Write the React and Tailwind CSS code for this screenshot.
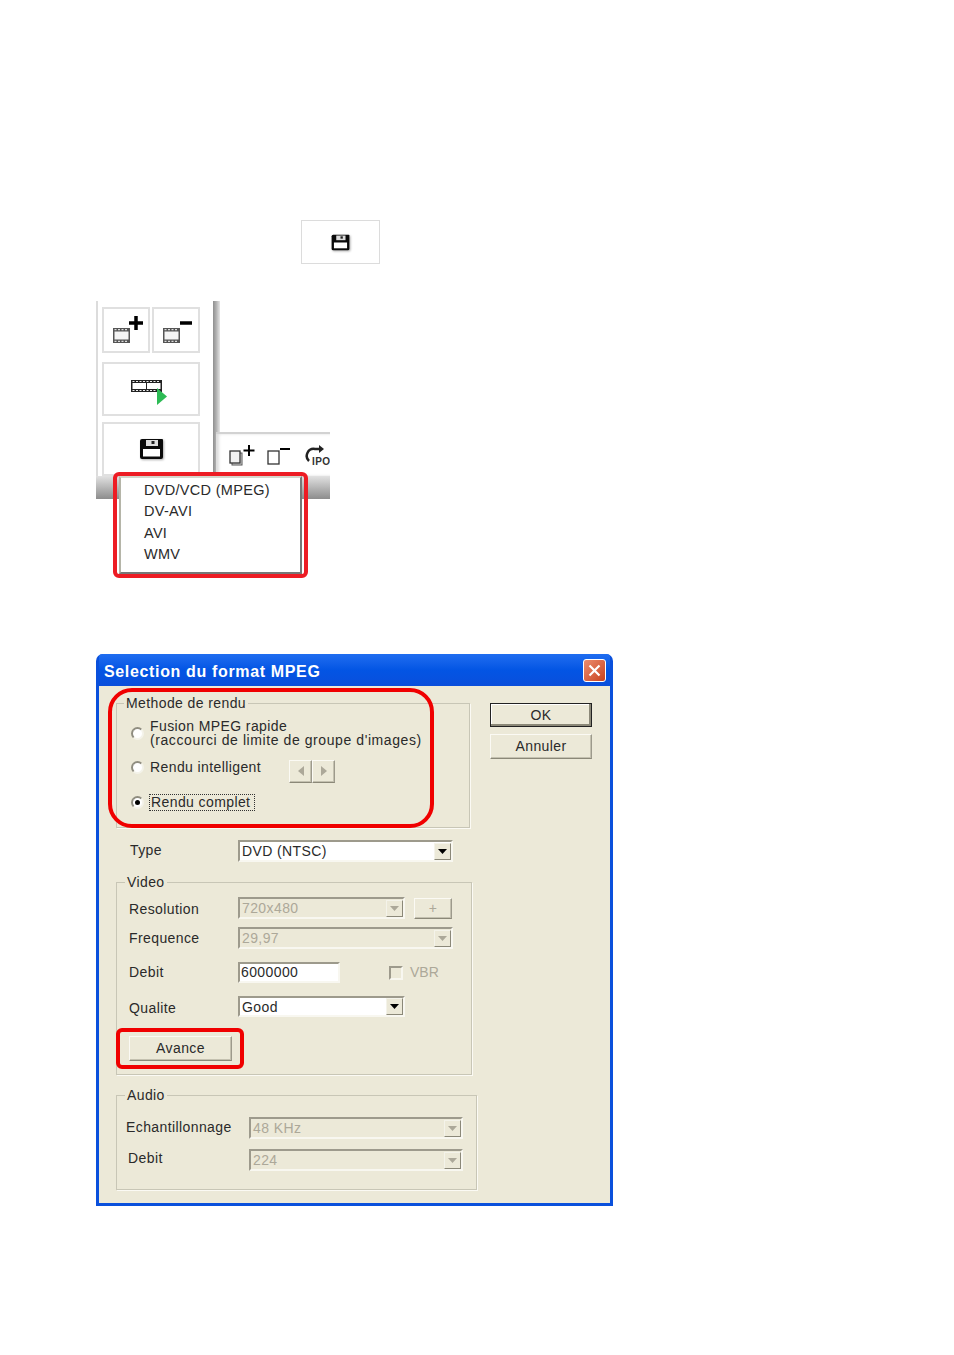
const FONT = "font-['Liberation_Sans',sans-serif] text-[14px] tracking-[0.4px] text-[#2a2a2a]";
const SUNKEN = 'border-2 border-t-[#9d9a8c] border-l-[#9d9a8c] border-r-[#f8f7f0] border-b-[#f8f7f0]';

function Floppy({ className }) {
  return (
    <svg viewBox="0 0 25 22" className={`drop-shadow-[1px_1px_1px_#aaa] ${className}`}>
      <path d="M1 3a2 2 0 0 1 2-2h20a1 1 0 0 1 1 1v17a2 2 0 0 1-2 2H3a2 2 0 0 1-2-2z" fill="#0a0a0a" />
      <rect x="7" y="2" width="12" height="6" fill="#ddd" />
      <rect x="12.500" y="3" width="3" height="3" fill="#222" />
      <rect x="4" y="11" width="17" height="7.500" fill="#fff" />
    </svg>
  );
}

function Film({ x, y }) {
  return (
    <g transform={`translate(${x} ${y})`}>
      <rect width="17" height="15" fill="#555" />
      <rect x="1.500" y="3.500" width="14" height="8" fill="#f4f4f4" />
      <path d="M1.500 1.700h14M1.500 13.300h14" stroke="#ddd" strokeWidth="1.200" strokeDasharray="2 1.500" />
    </g>
  );
}

function ToolButton({ className, children }) {
  return (
    <div className={`flex items-center justify-center border-2 border-[#e0e0e0] bg-white ${className}`}>
      {children}
    </div>
  );
}

function Arrow({ disabled }) {
  return (
    <span className="flex h-[17px] w-[17px] shrink-0 items-center justify-center border border-t-[#f4f3ea] border-l-[#f4f3ea] border-r-[#8b8878] border-b-[#8b8878] bg-[#ece9d8]">
      <svg viewBox="0 0 9 5" className="h-[5px] w-[9px]">
        <path d="M0 0h9L4.500 5z" fill={disabled ? '#aca899' : '#000'} />
      </svg>
    </span>
  );
}

function Combo({ value, disabled, className }) {
  return (
    <div className={`flex items-center justify-between ${SUNKEN} ${disabled ? 'bg-[#ece9d8] text-[#aca899]' : 'bg-white'} ${className}`}>
      <span className="pl-[2px] leading-none">{value}</span>
      <Arrow disabled={disabled} />
    </div>
  );
}

function XpButton({ children, className, isDefault, disabled }) {
  return (
    <div
      className={`flex items-center justify-center border bg-[#ece9d8] ${
        isDefault
          ? 'border-[#222] shadow-[inset_-2px_-2px_0_#8b8878,inset_1px_1px_0_#fff]'
          : 'border-t-[#fbfaf4] border-l-[#fbfaf4] border-r-[#9d9a8c] border-b-[#8b8878] shadow-[inset_-1px_-1px_0_#c4c1b0]'
      } ${disabled ? 'text-[#aca899]' : ''} ${className}`}
    >
      {children}
    </div>
  );
}

function Radio({ checked }) {
  return (
    <span className="flex h-[13px] w-[13px] shrink-0 items-center justify-center rounded-full border-2 border-t-[#8f8d80] border-l-[#8f8d80] border-r-[#f4f3ea] border-b-[#f4f3ea] bg-white">
      {checked && <span className="h-[5px] w-[5px] shrink-0 rounded-full bg-black" />}
    </span>
  );
}

function Group({ title, legendLeft, className, children }) {
  return (
    <div className={`relative border border-[#c8c6b6] shadow-[1px_1px_0_#fbfaf4] ${className}`}>
      <span className={`absolute -top-[10px] bg-[#ece9d8] px-[2px] leading-[18px] ${legendLeft}`}>{title}</span>
      {children}
    </div>
  );
}

function Toolbar() {
  return (
    <div className="relative ml-[96px] mt-[37px] w-[234px]">
      <div className="flex h-[175px]">
        <div className="flex w-[117px] shrink-0 flex-col border-l-2 border-[#dcdcdc] pl-[4px] pt-[6px]">
          <div className="flex gap-[2px]">
            <ToolButton className="h-[46px] w-[48px]">
              <svg viewBox="0 0 48 46" className="h-[46px] w-[48px] shrink-0">
                <Film x="11" y="21" />
                <path d="M34 9v14M27 16h14" stroke="#000" strokeWidth="3.500" />
              </svg>
            </ToolButton>
            <ToolButton className="h-[46px] w-[48px]">
              <svg viewBox="0 0 48 46" className="h-[46px] w-[48px] shrink-0">
                <Film x="11" y="21" />
                <path d="M28 16h12" stroke="#000" strokeWidth="3.500" />
              </svg>
            </ToolButton>
          </div>
          <ToolButton className="mt-[9px] h-[54px] w-[98px]">
            <svg viewBox="0 0 38 26" className="-ml-[2px] mt-[8px] h-[26px] w-[38px] shrink-0">
              <rect width="31" height="12" fill="#222" />
              <rect x="1.500" y="3" width="13.500" height="6" fill="#fff" />
              <rect x="16" y="3" width="13.500" height="6" fill="#fff" />
              <path d="M1.500 1.500h28M1.500 10.500h28" stroke="#eee" strokeDasharray="2 1.500" />
              <path d="M26 8l10 8.500L26 25z" fill="#2dbb55" />
            </svg>
          </ToolButton>
          <ToolButton className="mt-[6px] h-[54px] w-[98px]">
            <Floppy className="h-[22px] w-[25px]" />
          </ToolButton>
        </div>
        <div className="w-[7px] shrink-0 bg-linear-to-r from-[#8f8f8f] via-[#b5b5b5] to-[#e6e6e6]" />
        <div className="-ml-[4px] flex min-w-0 flex-1 flex-col justify-end">
          <div className="flex h-[44px] items-center gap-[12px] overflow-hidden border-t-2 border-[#d2d2d2] bg-white pl-[13px] shadow-[inset_3px_0_3px_#ddd]">
            <svg viewBox="0 0 26 22" className="h-[22px] w-[26px] shrink-0">
              <rect x="3" y="9" width="10" height="12" fill="#ddd" stroke="#555" />
              <rect x="1" y="7" width="10" height="12" fill="#f2f2f2" stroke="#333" strokeWidth="1.300" />
              <path d="M20 1v11M14.500 6.500h11" stroke="#000" strokeWidth="2" />
            </svg>
            <svg viewBox="0 0 26 22" className="h-[22px] w-[26px] shrink-0">
              <rect x="1" y="7" width="11" height="13" fill="#fff" stroke="#333" strokeWidth="1.300" />
              <path d="M13 5h10" stroke="#000" strokeWidth="2" />
            </svg>
            <svg viewBox="0 0 25 24" className="h-[24px] w-[25px] shrink-0">
              <path d="M4 18a7 7 0 0 1 6-12h5" fill="none" stroke="#222" strokeWidth="2.500" />
              <path d="M14 2l5 4-5 4z" fill="#222" />
              <text x="7" y="22" className="font-['Liberation_Sans',sans-serif] text-[10px] font-bold" fill="#333">IPO</text>
            </svg>
          </div>
        </div>
      </div>
      <div className="h-[23px] bg-linear-to-b from-[#e2e2e2] to-[#8d8d8d]" />
      <div className="absolute left-[23px] top-[175px] h-[98px] w-[183px] border-2 border-t-[#d5d5cc] border-l-[#b5b5a8] border-r-[#777] border-b-[#777] bg-white pl-[23px] pt-[2px] text-[14.500px] leading-[21.300px] tracking-[0.3px]">
        <div>DVD/VCD (MPEG)</div>
        <div>DV-AVI</div>
        <div>AVI</div>
        <div>WMV</div>
      </div>
      <div className="absolute left-[17px] top-[171px] h-[106px] w-[195px] rounded-[6px] border-4 border-[#ed1c24]" />
    </div>
  );
}

function Dialog() {
  return (
    <div className="ml-[96px] mt-[155px] w-[517px] overflow-hidden rounded-t-[7px] bg-[#0a50dc] px-[3px] pb-[3px]">
      <div className="flex h-[32px] items-center justify-between bg-linear-to-b from-[#1f6df0] via-[#0355e4] to-[#0a4edb] pr-[4px] pl-[5px]">
        <span className="pt-[3px] font-['Liberation_Sans',sans-serif] text-[16px] font-bold tracking-[0.65px] text-white">
          Selection du format MPEG
        </span>
        <div className="flex h-[23px] w-[23px] items-center justify-center rounded-[3px] border border-white bg-linear-to-br from-[#eb8c6e] to-[#c8401a]">
          <svg viewBox="0 0 13 13" className="h-[13px] w-[13px]">
            <path d="M1.500 1.500l10 10M11.500 1.500l-10 10" stroke="#fff" strokeWidth="2.200" />
          </svg>
        </div>
      </div>

      <div className="flex h-[517px] bg-[#ece9d8] pl-[17px] pt-[17px]">
        <div className="flex w-[374px] flex-col">
          <Group title="Methode de rendu" legendLeft="left-[7px]" className="h-[125px] w-[354px]">
            <div className="absolute -left-[9px] -top-[16px] h-[140px] w-[326px] rounded-[24px] border-4 border-[#f00000]" />
            <div className="mt-[14px] flex h-[30px] items-center gap-[6px] pl-[14px]">
              <Radio />
              <div className="leading-[14.500px]">
                <div>Fusion MPEG rapide</div>
                <div className="tracking-[0.58px]">(raccourci de limite de groupe d'images)</div>
              </div>
            </div>
            <div className="mt-[8px] flex h-[23px] items-center pl-[14px]">
              <Radio />
              <span className="ml-[6px] w-[139px]">Rendu intelligent</span>
              <div className="mt-[7px] flex">
                <XpButton className="h-[23px] w-[23px]" disabled>
                  <svg viewBox="0 0 6 10" className="h-[10px] w-[6px]"><path d="M6 0v10L0 5z" fill="#aca899" /></svg>
                </XpButton>
                <XpButton className="h-[23px] w-[23px]" disabled>
                  <svg viewBox="0 0 6 10" className="h-[10px] w-[6px]"><path d="M0 0v10l6-5z" fill="#aca899" /></svg>
                </XpButton>
              </div>
            </div>
            <div className="mt-[13px] flex h-[20px] items-center pl-[14px]">
              <Radio checked />
              <span className="ml-[5px] border border-dotted border-[#333] pl-[1px] pr-[4px] leading-[15px]">Rendu complet</span>
            </div>
          </Group>

          <div className="ml-[14px] mt-[12px] flex items-center">
            <span className="w-[108px] -translate-y-[1px]">Type</span>
            <Combo value="DVD (NTSC)" className="h-[22px] w-[215px]" />
          </div>

          <Group title="Video" legendLeft="left-[8px]" className="mt-[20px] h-[193px] w-[356px]">
            <div className="flex flex-col pl-[12px] pt-[14px]">
              <div className="flex items-center">
                <span className="w-[109px] translate-y-[1px]">Resolution</span>
                <Combo value="720x480" disabled className="h-[22px] w-[167px]" />
                <XpButton className="ml-[9px] h-[21px] w-[38px]" disabled>+</XpButton>
              </div>
              <div className="mt-[8px] flex items-center">
                <span className="w-[109px]">Frequence</span>
                <Combo value="29,97" disabled className="h-[22px] w-[215px]" />
              </div>
              <div className="mt-[13px] flex items-center">
                <span className="w-[109px]">Debit</span>
                <div className={`flex h-[21px] w-[102px] items-center bg-white pl-[1px] ${SUNKEN}`}>6000000</div>
                <span className={`ml-[49px] h-[14px] w-[14px] ${SUNKEN}`} />
                <span className="ml-[7px] tracking-[0px] text-[#aca899]">VBR</span>
              </div>
              <div className="mt-[13px] flex items-center">
                <span className="w-[109px] translate-y-[2px]">Qualite</span>
                <Combo value="Good" className="h-[21px] w-[167px]" />
              </div>
              <div className="relative mt-[19px] w-[103px]">
                <XpButton className="h-[25px] w-[103px]">Avance</XpButton>
                <div className="absolute -left-[13px] -top-[8px] h-[41px] w-[128px] rounded-[6px] border-4 border-[#f00000]" />
              </div>
            </div>
          </Group>

          <Group title="Audio" legendLeft="left-[8px]" className="mt-[20px] h-[95px] w-[361px]">
            <div className="flex flex-col pl-[9px] pt-[21px]">
              <div className="flex items-center">
                <span className="w-[123px] -translate-y-[1px]">Echantillonnage</span>
                <Combo value="48 KHz" disabled className="h-[22px] w-[214px]" />
              </div>
              <div className="mt-[10px] flex items-center">
                <span className="ml-[2px] w-[121px] -translate-y-[2px]">Debit</span>
                <Combo value="224" disabled className="h-[22px] w-[214px]" />
              </div>
            </div>
          </Group>
        </div>

        <div className="flex flex-col gap-[7px]">
          <XpButton isDefault className="h-[24px] w-[102px]">OK</XpButton>
          <XpButton className="h-[25px] w-[102px]">Annuler</XpButton>
        </div>
      </div>
    </div>
  );
}

export default function App() {
  return (
    <div className={`min-h-[1355px] bg-white pt-[220px] ${FONT}`}>
      <div className="ml-[301px] flex h-[44px] w-[79px] items-center justify-center border border-[#dcdcdc]">
        <Floppy className="h-[17px] w-[21px]" />
      </div>
      <Toolbar />
      <Dialog />
    </div>
  );
}
